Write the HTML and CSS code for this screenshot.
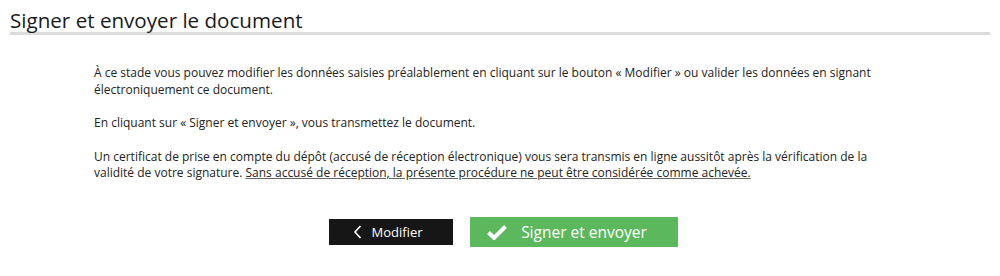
FILE: index.html
```html
<!DOCTYPE html>
<html lang="fr">
<head>
  <meta charset="utf-8">
  <title>Signer et envoyer le document</title>
  <link rel="stylesheet" href="styles.css">
</head>
<body>
  <div class="page">
    <h1 class="title">Signer et envoyer le document</h1>

    <div class="content">
      <p>À ce stade vous pouvez modifier les données saisies préalablement en cliquant sur le bouton « Modifier » ou valider les données en signant électroniquement ce document.</p>
      <p>En cliquant sur « Signer et envoyer », vous transmettez le document.</p>
      <p>Un certificat de prise en compte du dépôt (accusé de réception électronique) vous sera transmis en ligne aussitôt après la vérification de la validité de votre signature. <u>Sans accusé de réception, la présente procédure ne peut être considérée comme achevée.</u></p>
    </div>

    <div class="actions">
      <button class="btn btn--back">
        <svg class="btn__icon" width="10" height="14" viewBox="0 0 10 14"><path d="M7.5 1 L2 7 L7.5 13" fill="none" stroke="#fff" stroke-width="1.6"/></svg>
        Modifier
      </button>
      <button class="btn btn--sign">
        <svg class="btn__icon" width="20" height="16" viewBox="0 0 20 16"><path d="M1.5 8.5 L7 14 L18.5 2.5" fill="none" stroke="#fff" stroke-width="4"/></svg>
        Signer et envoyer
      </button>
    </div>
  </div>
</body>
</html>
```

FILE: styles.css
```css
* {
	box-sizing: border-box;
}

body {
	margin: 0;
	font-family: "Open Sans", sans-serif;
	color: #222;
	background: #fff;
}

.page {
	padding: 8px 10px 0;
}

.title {
	margin: 0;
	font-size: 20.6px;
	line-height: 24px;
	font-weight: normal;
	color: #1a1a1a;
	border-bottom: 3px solid #dcdcdc;
}

.content {
	padding: 30px 84px 0;
	font-size: 12px;
	line-height: 16.5px;
}

.content p {
	margin: 0 0 17px;
}

.content u {
	text-decoration-color: #666;
}

.actions {
	display: flex;
	justify-content: center;
	align-items: center;
	gap: 17px;
	margin-top: 35px;
	padding-left: 7px;
}

.btn {
	display: flex;
	align-items: center;
	justify-content: center;
	border: none;
	color: #fff;
	font-family: "Open Sans", sans-serif;
	cursor: pointer;
}

.btn--back {
	width: 124px;
	height: 26px;
	background: #161616;
	font-size: 13px;
	gap: 8px;
	padding-right: 12px;
}

.btn--sign {
	width: 208px;
	height: 30px;
	background: #5cb85c;
	font-size: 15.5px;
	gap: 14px;
	padding-right: 20px;
}
```
